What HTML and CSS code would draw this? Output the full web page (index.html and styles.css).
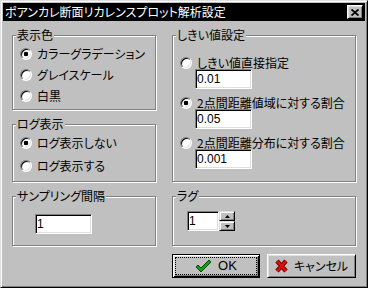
FILE: index.html
```html
<!DOCTYPE html>
<html>
<head>
    <meta charset="utf-8">
    <title>ポアンカレ断面リカレンスプロット解析設定</title>
    <link rel="stylesheet" href="styles.css">
</head>
<body>
    <div class="window">
        <div class="titlebar">
            <span class="title">ポアンカレ断面リカレンスプロット解析設定</span>
            <button class="close-btn">
                <svg width="8" height="7" viewBox="0 0 8 7"><path d="M0.5 0.5 L7.5 6.5 M7.5 0.5 L0.5 6.5" stroke="#000" stroke-width="1.8"/></svg>
            </button>
        </div>
        <div class="dialog">
            <div class="col-left">
                <div class="group group-color">
                    <div class="group-title">表示色</div>
                    <div class="options">
                        <div class="radio-row"><span class="radio-mark checked"></span>カラーグラデーション</div>
                        <div class="radio-row"><span class="radio-mark"></span>グレイスケール</div>
                        <div class="radio-row"><span class="radio-mark"></span>白黒</div>
                    </div>
                </div>
                <div class="group group-log">
                    <div class="group-title">ログ表示</div>
                    <div class="options">
                        <div class="radio-row"><span class="radio-mark checked"></span>ログ表示しない</div>
                        <div class="radio-row"><span class="radio-mark"></span>ログ表示する</div>
                    </div>
                </div>
            </div>

            <div class="group group-threshold">
                <div class="group-title">しきい値設定</div>
                <div class="threshold-list">
                    <div class="threshold-item">
                        <div class="radio-row"><span class="radio-mark"></span>しきい値直接指定</div>
                        <input class="field" type="text" value="0.01">
                    </div>
                    <div class="threshold-item">
                        <div class="radio-row"><span class="radio-mark checked"></span>2点間距離値域に対する割合</div>
                        <input class="field" type="text" value="0.05">
                    </div>
                    <div class="threshold-item">
                        <div class="radio-row"><span class="radio-mark"></span>2点間距離分布に対する割合</div>
                        <input class="field" type="text" value="0.001">
                    </div>
                </div>
            </div>

            <div class="group group-sampling">
                <div class="group-title">サンプリング間隔</div>
                <input class="field sampling-field" type="text" value="1">
            </div>

            <div class="group group-lag">
                <div class="group-title">ラグ</div>
                <div class="spinbox">
                    <input class="field lag-field" type="text" value="1">
                    <div class="spin">
                        <span class="spin-btn"><svg width="5" height="3" viewBox="0 0 5 3"><polygon points="0,3 5,3 2.5,0" fill="#000"/></svg></span>
                        <span class="spin-btn"><svg width="5" height="3" viewBox="0 0 5 3"><polygon points="0,0 5,0 2.5,3" fill="#000"/></svg></span>
                    </div>
                </div>
            </div>

            <div class="buttons">
                <button class="btn btn-default">
                    <svg width="17" height="14" viewBox="0 0 17 14">
                        <polygon points="1,8 3,6 6,9 14,1 16,3 6,13" fill="#10a010" stroke="#004800" stroke-width="1" stroke-linejoin="round"/>
                    </svg>
                    <span class="btn-text latin">OK</span>
                </button>
                <button class="btn">
                    <svg width="13" height="14" viewBox="0 0 13 14">
                        <path d="M2 2 L11 12 M11 2 L2 12" stroke="#700000" stroke-width="4.5"/>
                        <path d="M2 2 L11 12 M11 2 L2 12" stroke="#e01010" stroke-width="2.4"/>
                    </svg>
                    <span class="btn-text">キャンセル</span>
                </button>
            </div>
        </div>
    </div>
</body>
</html>
```

FILE: styles.css
```css
body {
    margin: 0;
    font-family: "Noto Sans CJK JP", "Liberation Sans", sans-serif;
    font-size: 12px;
    font-feature-settings: "palt";
    color: #000;
    background-color: #c0c0c0;
}

/* window frame */
.window {
    width: 368px;
    height: 288px;
    box-sizing: border-box;
    border: 1px solid;
    border-color: #dfdfdf #000 #000 #dfdfdf;
    box-shadow: inset 1px 1px #fff, inset -1px -1px #808080;
    padding: 2px;
    background-color: #c0c0c0;
    display: flex;
    flex-direction: column;
}

.titlebar {
    height: 18px;
    flex: none;
    background-color: #000;
    color: #fff;
    display: flex;
    align-items: center;
    justify-content: space-between;
    padding: 0 2px;
}

.title {
    line-height: 18px;
}

.close-btn {
    width: 16px;
    height: 14px;
    box-sizing: border-box;
    padding: 0;
    border: 1px solid;
    border-color: #fff #000 #000 #fff;
    box-shadow: inset 1px 1px #dfdfdf, inset -1px -1px #808080;
    background-color: #c0c0c0;
    display: flex;
    align-items: center;
    justify-content: center;
}

/* dialog body */
.dialog {
    flex: 1;
    display: grid;
    grid-template-columns: 144px 184px;
    column-gap: 16px;
    align-content: start;
    padding: 14px 0 0 9px;
}

.col-left {
    display: flex;
    flex-direction: column;
    gap: 14px;
}

/* etched group box */
.group {
    box-sizing: border-box;
    border: 1px solid #808080;
    box-shadow: inset 1px 1px #fff, 1px 1px #fff;
    padding: 0 7px;
}

.group-title {
    width: max-content;
    margin: -8px 0 0 -4px;
    padding: 0 1px;
    line-height: 14px;
    background-color: #c0c0c0;
}

.group-color { height: 75px; }
.group-log { height: 58px; }
.group-threshold { height: 147px; }
.group-sampling { height: 50px; margin-top: 14px; }
.group-lag { height: 50px; margin-top: 14px; }

.options {
    display: flex;
    flex-direction: column;
    margin-top: 1px;
}

.radio-row {
    height: 21px;
    display: flex;
    align-items: center;
    gap: 5px;
    line-height: 14px;
    white-space: nowrap;
}

.group-log .options {
    margin-top: 0;
}

.group-log .radio-row {
    height: 23px;
}

.radio-mark {
    flex: none;
    width: 12px;
    height: 12px;
    box-sizing: border-box;
    border-radius: 50%;
    border: 1px solid;
    border-color: #808080 #fff #fff #808080;
    box-shadow: inset 1px 1px #000, inset -1px -1px #dfdfdf;
    background-color: #fff;
}

.radio-mark.checked {
    background: radial-gradient(circle at center, #000 0 2px, #fff 2.6px);
}

.threshold-list {
    display: flex;
    flex-direction: column;
    gap: 7px;
    margin-top: 14px;
}

.threshold-item {
    display: flex;
    flex-direction: column;
    align-items: flex-start;
}

.threshold-item .radio-row {
    height: 13px;
}

/* sunken text field */
.field {
    display: block;
    width: 57px;
    height: 20px;
    box-sizing: border-box;
    margin: 0 0 0 15px;
    padding: 0 1px;
    border: 1px solid;
    border-color: #808080 #fff #fff #808080;
    box-shadow: inset 1px 1px #000, inset -1px -1px #dfdfdf;
    background-color: #fff;
    font-family: "Liberation Sans", sans-serif;
    font-size: 12px;
    color: #000;
    outline: none;
}

.sampling-field {
    margin-top: 11px;
}

.spinbox {
    display: flex;
    margin: 8px 0 0 7px;
}

.lag-field {
    width: 32px;
    margin: 0;
}

.spin {
    display: flex;
    flex-direction: column;
}

.spin-btn {
    width: 16px;
    height: 10px;
    box-sizing: border-box;
    border: 1px solid;
    border-color: #dfdfdf #000 #000 #dfdfdf;
    box-shadow: inset 1px 1px #fff, inset -1px -1px #808080;
    background-color: #c0c0c0;
    display: flex;
    align-items: center;
    justify-content: center;
}

/* push buttons */
.buttons {
    grid-column: 2;
    margin-top: 8px;
    display: flex;
    gap: 7px;
}

.btn {
    width: 89px;
    height: 24px;
    box-sizing: border-box;
    padding: 0;
    border: 1px solid;
    border-color: #fff #000 #000 #fff;
    box-shadow: inset 1px 1px #dfdfdf, inset -1px -1px #808080;
    background-color: #c0c0c0;
    display: flex;
    align-items: center;
    justify-content: center;
    gap: 6px;
    font-family: inherit;
    font-size: 12px;
    font-feature-settings: "palt";
    color: #000;
}

.btn-default {
    width: 88px;
    border-color: #000;
    box-shadow: inset 1px 1px #fff, inset -1px -1px #000, inset 2px 2px #dfdfdf, inset -2px -2px #808080;
    outline: 1px dotted #000;
    outline-offset: -4px;
}

.btn-text {
    line-height: 14px;
}

.latin {
    font-family: "Liberation Sans", sans-serif;
    font-size: 13px;
}
```
